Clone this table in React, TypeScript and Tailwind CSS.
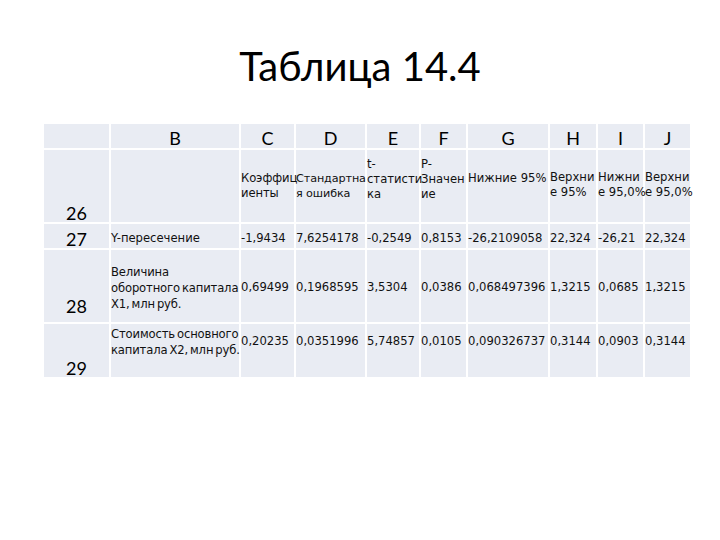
import React from "react";

const cell = "border-2 border-white bg-[#e9ecf3] p-0 pl-0 pr-[1px] align-top whitespace-nowrap overflow-visible";
const num = "border-2 border-white bg-[#e9ecf3] p-0 align-bottom text-center text-[18px] font-['Lato',sans-serif] text-black";
const label = " [word-spacing:-1.5px] tracking-[-0.15px]";

export default function App() {
  return (
    <div className="w-[720px] h-[540px] bg-white relative font-['DejaVu_Sans',sans-serif] text-[11.6px] text-[#111]">
      <h1 className="pt-[38px] h-[122px] text-center text-[40px] leading-[56px] font-['Lato',sans-serif] text-black">
        Таблица 14.4
      </h1>
      <table className="ml-[42px] table-fixed border-collapse w-[648px]">
        <colgroup>
          <col className="w-[67px]" />
          <col className="w-[130px]" />
          <col className="w-[55px]" />
          <col className="w-[71px]" />
          <col className="w-[54px]" />
          <col className="w-[47px]" />
          <col className="w-[82px]" />
          <col className="w-[48px]" />
          <col className="w-[47px]" />
          <col className="w-[47px]" />
        </colgroup>
        <tbody className="leading-[15px]">
          <tr className="h-[26px]">
            <td className={num}></td>
            {["B", "C", "D", "E", "F", "G", "H", "I", "J"].map((l) => (
              <td key={l} className={num + " pb-[2px]"}>
                {l}
              </td>
            ))}
          </tr>
          <tr className="h-[74px]">
            <td className={num + " pb-[1px]"}>26</td>
            <td className={cell}></td>
            <td className={cell + " pt-[21px] tracking-[-0.1px]"}>Коэффиц<br />иенты</td>
            <td className={cell + " pt-[21px] text-[11.2px] tracking-[-0.1px]"}>Стандартна<br />я ошибка</td>
            <td className={cell + " pt-[7px]"}>t-<br />статисти<br />ка</td>
            <td className={cell + " pt-[7px]"}>P-<br />Значен<br />ие</td>
            <td className={cell + " pt-[21px]"}>Нижние 95%</td>
            <td className={cell + " pt-[20px]"}>Верхни<br />е 95%</td>
            <td className={cell + " pt-[20px]"}>Нижни<br />е 95,0%</td>
            <td className={cell + " pt-[20px]"}>Верхни<br />е 95,0%</td>
          </tr>
          <tr className="h-[26px]">
            <td className={num + " pb-[1px]"}>27</td>
            <td className={cell + " pt-[7px]"}>Y-пересечение</td>
            <td className={cell + " pt-[7px]"}>-1,9434</td>
            <td className={cell + " pt-[7px]"}>7,6254178</td>
            <td className={cell + " pt-[7px]"}>-0,2549</td>
            <td className={cell + " pt-[7px]"}>0,8153</td>
            <td className={cell + " pt-[7px]"}>-26,2109058</td>
            <td className={cell + " pt-[7px]"}>22,324</td>
            <td className={cell + " pt-[7px]"}>-26,21</td>
            <td className={cell + " pt-[7px]"}>22,324</td>
          </tr>
          <tr className="h-[74px]">
            <td className={num + " pb-[8px]"}>28</td>
            <td className={cell + label + " pt-[14px] leading-[16px]"}>
              Величина<br />оборотного капитала<br />X1, млн руб.
            </td>
            <td className={cell + " pt-[30px]"}>0,69499</td>
            <td className={cell + " pt-[30px]"}>0,1968595</td>
            <td className={cell + " pt-[30px]"}>3,5304</td>
            <td className={cell + " pt-[30px]"}>0,0386</td>
            <td className={cell + " pt-[30px]"}>0,068497396</td>
            <td className={cell + " pt-[30px]"}>1,3215</td>
            <td className={cell + " pt-[30px]"}>0,0685</td>
            <td className={cell + " pt-[30px]"}>1,3215</td>
          </tr>
          <tr className="h-[55px]">
            <td className={num + " pb-[1px]"}>29</td>
            <td className={cell + label + " pt-[2px] leading-[16px]"}>
              Стоимость основного<br />капитала X2, млн руб.
            </td>
            <td className={cell + " pt-[10px]"}>0,20235</td>
            <td className={cell + " pt-[10px]"}>0,0351996</td>
            <td className={cell + " pt-[10px]"}>5,74857</td>
            <td className={cell + " pt-[10px]"}>0,0105</td>
            <td className={cell + " pt-[10px]"}>0,090326737</td>
            <td className={cell + " pt-[10px]"}>0,3144</td>
            <td className={cell + " pt-[10px]"}>0,0903</td>
            <td className={cell + " pt-[10px]"}>0,3144</td>
          </tr>
        </tbody>
      </table>
    </div>
  );
}
